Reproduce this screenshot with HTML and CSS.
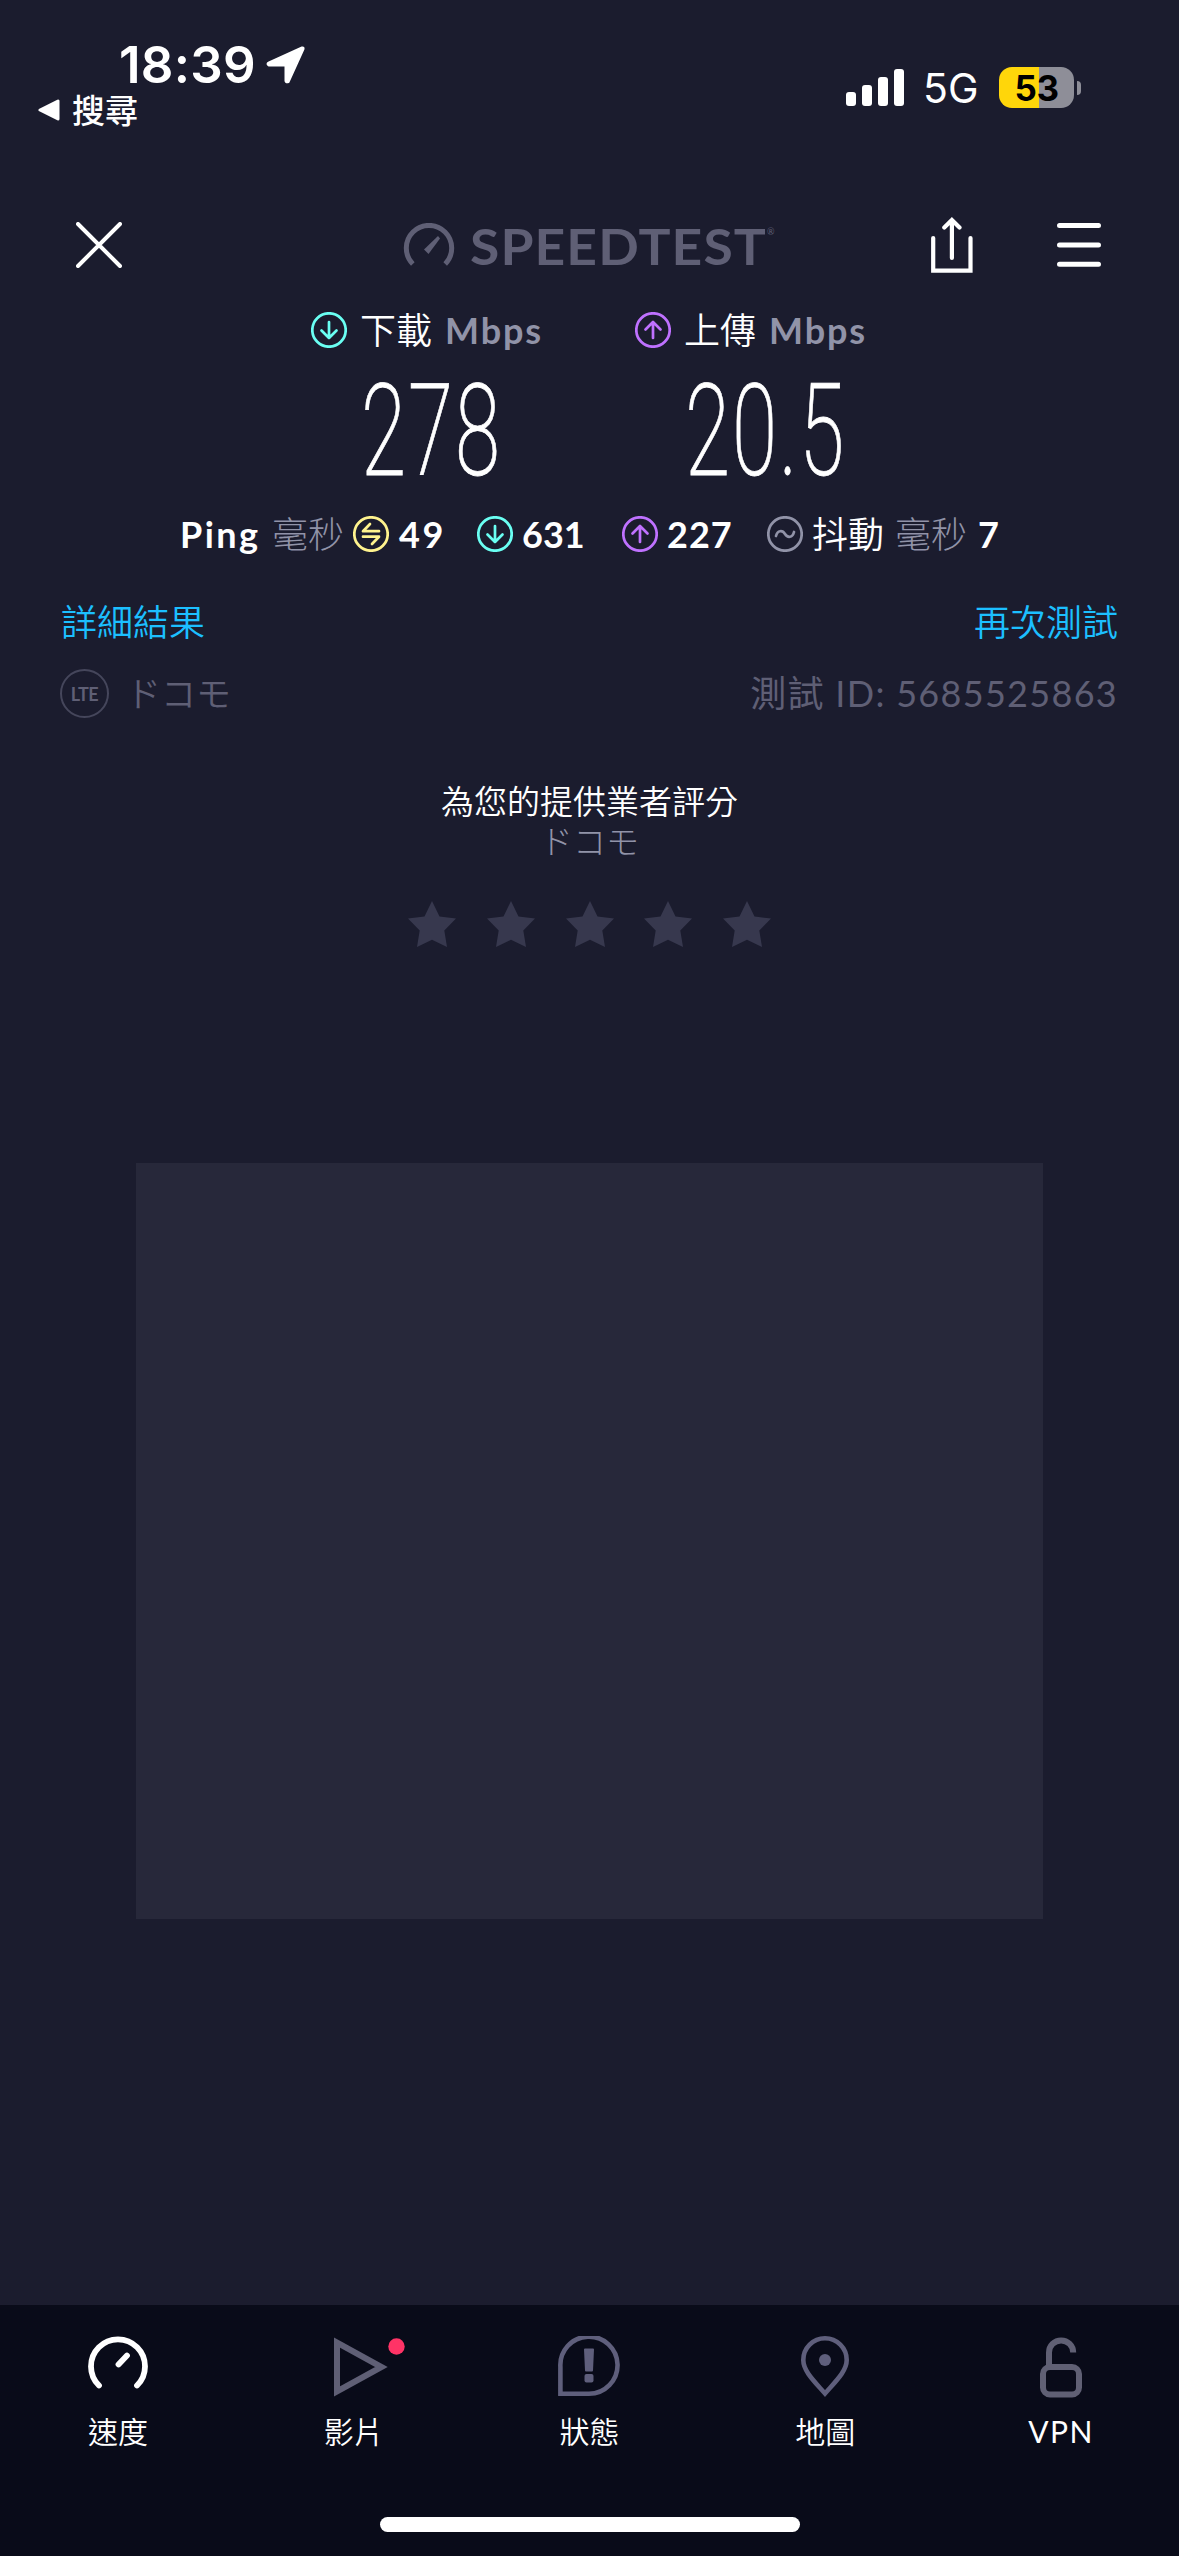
FILE: index.html
```html
<!DOCTYPE html>
<html lang="zh-Hant">
<head>
<meta charset="utf-8">
<title>Speedtest</title>
<link rel="stylesheet" href="styles.css">
</head>
<body>
<svg class="defs" aria-hidden="true">
  <symbol id="down" viewBox="0 0 36 36"><circle cx="18" cy="18" r="16.7"/><path d="M18 10v16M10.5 18.500l7.500 7.500 7.500-7.500"/></symbol>
  <symbol id="up" viewBox="0 0 36 36"><circle cx="18" cy="18" r="16.700"/><path d="M18 26V10M10.500 17.500L18 10l7.500 7.500"/></symbol>
  <symbol id="idle" viewBox="0 0 36 36"><circle cx="18" cy="18" r="16.700"/><path d="M17 8L10 15.200H26M10 20.700H26L19 28"/></symbol>
  <symbol id="jitter" viewBox="0 0 36 36"><circle cx="18" cy="18" r="16.700"/><path d="M9 20c1.500-6 6.500-6 9-2s7.500 4 9-2"/></symbol>
  <symbol id="star" viewBox="0 0 48 46"><path d="M24 0L31.500 15.500 48 17.600 36.300 29.400 39 46 24 38.800 9 46 11.700 29.400 0 17.600 16.500 15.500z"/></symbol>
</svg>

<header class="status">
  <div class="status-left">
    <div class="clock"><span>18:39</span>
      <svg width="40" height="40" viewBox="0 0 40 40"><path d="M3 17.500L36 2.500Q38 2 37.500 4L22.500 37Q20 38 19.500 36V20.500H3Q0 19 3 17.500z" fill="#fff" stroke="#fff" stroke-width="2" stroke-linejoin="round"/></svg>
    </div>
    <div class="back">
      <svg width="22" height="24" viewBox="0 0 22 24"><path d="M2 12L20 3v18z" fill="#fff" stroke="#fff" stroke-width="3" stroke-linejoin="round"/></svg>
      <span>搜尋</span>
    </div>
  </div>
  <div class="status-right">
    <div class="signal"><i class="s1"></i><i class="s2"></i><i class="s3"></i><i class="s4"></i></div>
    <span class="network">5G</span>
    <div class="battery"><span>53</span></div>
    <i class="nub"></i>
  </div>
</header>

<nav class="topbar">
  <svg class="close" width="46" height="46" viewBox="0 0 46 46"><path d="M2 2l42 42M44 2L2 44"/></svg>
  <div class="logo">
    <svg width="52" height="44" viewBox="0 0 52 44"><path d="M9.800 41A22.700 22.700 0 1 1 42.200 41" fill="none" stroke="#5f5f75" stroke-width="5"/><path d="M21 26.500L35 13l2 2.500L25.500 31z" fill="#5f5f75"/></svg>
    <span class="wordmark">SPEEDTEST</span><span class="reg">®</span>
  </div>
  <svg class="share" width="42" height="56" viewBox="0 0 42 56"><path d="M2.200 21v32.700h37.300V21M20.900 41V3M13.300 10.500L20.900 3l7.600 7.500"/></svg>
  <svg class="menu" width="44" height="46" viewBox="0 0 44 46"><path d="M2.500 3.500h39M2.500 22.900h39M2.500 42.200h39"/></svg>
</nav>

<main>
  <section class="speeds">
    <div class="speed">
      <div class="label"><svg class="ic cyan"><use href="#down"/></svg><span>下載</span><b>Mbps</b></div>
      <div class="value"><span>278</span></div>
    </div>
    <div class="speed">
      <div class="label"><svg class="ic violet"><use href="#up"/></svg><span>上傳</span><b>Mbps</b></div>
      <div class="value"><span>20.5</span></div>
    </div>
  </section>

  <section class="ping">
    <b class="w-ping">Ping</b><span class="dim w-ms1">毫秒</span>
    <svg class="ic yellow"><use href="#idle"/></svg><b class="w-49">49</b>
    <svg class="ic cyan"><use href="#down"/></svg><b class="w-631">631</b>
    <svg class="ic violet"><use href="#up"/></svg><b class="w-227">227</b>
    <svg class="ic grey"><use href="#jitter"/></svg><span class="w-jit">抖動</span><span class="dim w-ms2">毫秒</span><b>7</b>
  </section>

  <section class="links"><a>詳細結果</a><a>再次測試</a></section>
  <section class="server">
    <div class="lte">LTE</div><span class="carrier">ドコモ</span>
    <span class="test-id">測試 ID: 5685525863</span>
  </section>

  <section class="rating">
    <h2>為您的提供業者評分</h2>
    <p>ドコモ</p>
    <div class="stars">
      <svg><use href="#star"/></svg><svg><use href="#star"/></svg><svg><use href="#star"/></svg><svg><use href="#star"/></svg><svg><use href="#star"/></svg>
    </div>
  </section>

  <div class="ad"></div>
</main>

<footer class="tabs">
  <div class="tab"><svg width="60" height="62" viewBox="0 0 60 62"><path d="M11 49.500A27 27 0 1 1 49 49.500M30.500 28.500L39 19.500" fill="none" stroke="#fff" stroke-width="5.800" stroke-linecap="round"/></svg><span>速度</span></div>
  <div class="tab"><svg class="video" width="72" height="62" viewBox="0 0 72 62"><path d="M3 6.500v49L47.500 31z" fill="none" stroke="#5f5f75" stroke-width="6"/><circle cx="62.500" cy="10.500" r="8.200" fill="#ff3366"/></svg><span>影片</span></div>
  <div class="tab"><svg width="62" height="62" viewBox="0 0 62 62"><path d="M2.400 57.800V31A28.600 28.600 0 1 1 31 57.800z" fill="none" stroke="#5f5f7c" stroke-width="4.600"/><path d="M26 13.500q0-1 1-1h8q1 0 1 1l-1 21q0 1-1 1h-6q-1 0-1-1z" fill="#5f5f7c"/><rect x="26.500" y="38" width="9" height="8.500" rx="2" fill="#5f5f7c"/></svg><span>狀態</span></div>
  <div class="tab"><svg width="50" height="62" viewBox="0 0 50 62"><path d="M25 57.500C14 45 3.300 35 3.300 24a21.700 21.700 0 0 1 43.400 0C46.700 35 36 45 25 57.500z" fill="none" stroke="#5f5f7c" stroke-width="4.600"/><circle cx="25" cy="24" r="6" fill="#5f5f7c"/></svg><span>地圖</span></div>
  <div class="tab"><svg width="44" height="62" viewBox="0 0 44 62"><rect x="4" y="31" width="36" height="27.500" rx="7" fill="none" stroke="#606074" stroke-width="6"/><path d="M10 31V16.500a12 12 0 0 1 24.200 0" fill="none" stroke="#606074" stroke-width="6"/></svg><span class="latin">VPN</span></div>
  <i class="home"></i>
</footer>
</body>
</html>
```

FILE: styles.css
```css
* { box-sizing: border-box; }
body {
  margin: 0;
  width: 1179px;
  height: 2556px;
  display: flex;
  flex-direction: column;
  background: #1b1c2e;
  color: #fff;
  font-family: Lato, "Noto Sans CJK TC", sans-serif;
  overflow: hidden;
}
svg { display: block; flex: none; }
.defs { position: absolute; width: 0; height: 0; }

/* status bar */
.status { height: 190px; display: flex; justify-content: space-between; flex: none; }
.status-left { padding: 36px 0 0 38px; }
.clock { display: flex; align-items: center; gap: 12px; height: 57px; padding-left: 81px; font: 600 51px/58px Inter, sans-serif; }
.clock span { width: 135px; letter-spacing: 0.3px; white-space: nowrap; }
.back { display: flex; align-items: center; gap: 12px; height: 34px; font: 500 33px/32px "Noto Sans CJK TC", sans-serif; }
.back span { padding-bottom: 3px; }
.status-right { display: flex; align-items: center; height: 41px; margin: 67px 98px 0 0; }
.signal { display: flex; align-items: flex-end; gap: 6px; height: 37px; }
.signal i { width: 10px; border-radius: 3px; background: #fff; }
.s1 { height: 14px; }
.s2 { height: 21px; }
.s3 { height: 29px; }
.s4 { height: 37px; }
.network { width: 76px; margin-left: 19px; font: 400 41px/46px Inter, sans-serif; }
.battery {
  width: 75px; height: 41px; border-radius: 13px;
  background: linear-gradient(90deg, #ffd60a 40px, #8e8e98 40px);
  color: #000; text-align: center; font: 700 35px/42px Inter, sans-serif; letter-spacing: -0.5px;
}
.nub { width: 4px; height: 14px; margin-left: 3px; border-radius: 0 4px 4px 0; background: #8e8e98; }

/* title bar */
.topbar { height: 110px; flex: none; display: flex; align-items: center; padding: 0 78px 0 76px; stroke-linecap: round; }
.close, .share, .menu { fill: none; stroke: #fff; }
.close { stroke-width: 4; }
.share { stroke-width: 4.2; margin: 0 84px 0 auto; }
.menu { stroke-width: 5; }
.logo { display: flex; align-items: center; width: 375px; margin-left: 281px; color: #5f5f75; stroke-linecap: butt; }
.wordmark { width: 296px; margin-left: 15px; font-weight: 700; font-size: 49px; line-height: 60px; padding-top: 2px; letter-spacing: 1px; transform: scaleX(1.09); transform-origin: left; }
.reg { font-size: 9px; line-height: 12px; align-self: flex-start; margin: 12px 0 0 1px; }

/* speeds */
.ic { width: 36px; height: 36px; fill: none; stroke-width: 2.700; stroke-linecap: round; stroke-linejoin: round; }
.cyan { stroke: #6afff3; }
.violet { stroke: #bf71ff; }
.yellow { stroke: #fff38e; }
.grey { stroke: #9193a8; }
.speeds { display: flex; gap: 94px; height: 201px; padding-left: 311px; }
.speed { width: 230px; }
.label { display: flex; align-items: center; height: 60px; font-size: 36px; line-height: 60px; font-weight: 350; white-space: nowrap; }
.label span { flex: none; width: 72px; margin-left: 13px; }
.label b { margin-left: 13px; color: #9193a8; letter-spacing: 1.900px; font-weight: 700; }
.value { display: flex; height: 140px; padding-left: 50px; }
.value span { font: 200 128px/142px Roboto, sans-serif; letter-spacing: 3px; -webkit-text-stroke: 0.800px #fff; transform: scaleX(0.64); transform-origin: left; }

.ping { display: flex; align-items: center; height: 66px; padding-left: 180px; font-size: 36px; line-height: 66px; font-weight: 350; white-space: nowrap; }
.ping b { font-weight: 700; letter-spacing: 0.500px; }
.dim { color: #9193a8; font-weight: 300; }
.ping .w-ping { width: 92px; letter-spacing: 2.400px; }
.w-ms1 { width: 81px; }
.ping .w-49 { width: 78px; margin-left: 10px; letter-spacing: 2.500px; }
.ping .w-631 { width: 100px; margin-left: 9px; letter-spacing: 0; }
.ping .w-227 { width: 100px; margin-left: 9px; letter-spacing: 1px; }
.w-jit { width: 83px; margin-left: 9px; }
.w-ms2 { width: 83px; }

.links { display: flex; justify-content: space-between; align-items: center; height: 90px; margin-top: 10px; padding: 0 61px; color: #1cbfff; font-size: 36px; line-height: 40px; font-weight: 350; }
.server { display: flex; align-items: center; height: 50px; margin-top: 1px; padding: 0 61px 0 60px; color: #5f5f75; font-size: 36px; line-height: 50px; font-weight: 350; }
.lte { width: 49px; height: 49px; border: 2px solid #45465b; border-radius: 50%; text-align: center; font: 700 18px/46px Lato, sans-serif; letter-spacing: -0.500px; }
.carrier { margin-left: 17px; font-size: 35px; }
.test-id { margin-left: auto; font-weight: 400; letter-spacing: 1.300px; }

.rating { text-align: center; padding-top: 63px; }
.rating h2 { margin: 0; font-size: 33px; line-height: 40px; font-weight: 350; }
.rating p { margin: 0; font-size: 33px; line-height: 40px; font-weight: 300; color: #9193a8; }
.stars { display: flex; justify-content: center; gap: 30.600px; margin-top: 40px; }
.stars svg { width: 48px; height: 46px; fill: #37384e; }
.ad { width: 907px; height: 756px; margin: 216px 0 0 136px; background: #27283a; }

/* tab bar */
.tabs { margin-top: auto; flex: none; height: 251px; display: grid; grid-template-columns: repeat(5, 1fr); grid-template-rows: 212px 15px; background: #090b19; }
.tab { display: flex; flex-direction: column; align-items: center; padding-top: 31px; font-size: 30px; line-height: 40px; font-weight: 350; }
.tab span { margin-top: 13px; }
.video { margin-left: 32px; }
.tab .latin { letter-spacing: 1.500px; font-weight: 400; }
.home { grid-column: 1 / -1; justify-self: center; width: 420px; height: 15px; border-radius: 8px; background: #fff; }
```
